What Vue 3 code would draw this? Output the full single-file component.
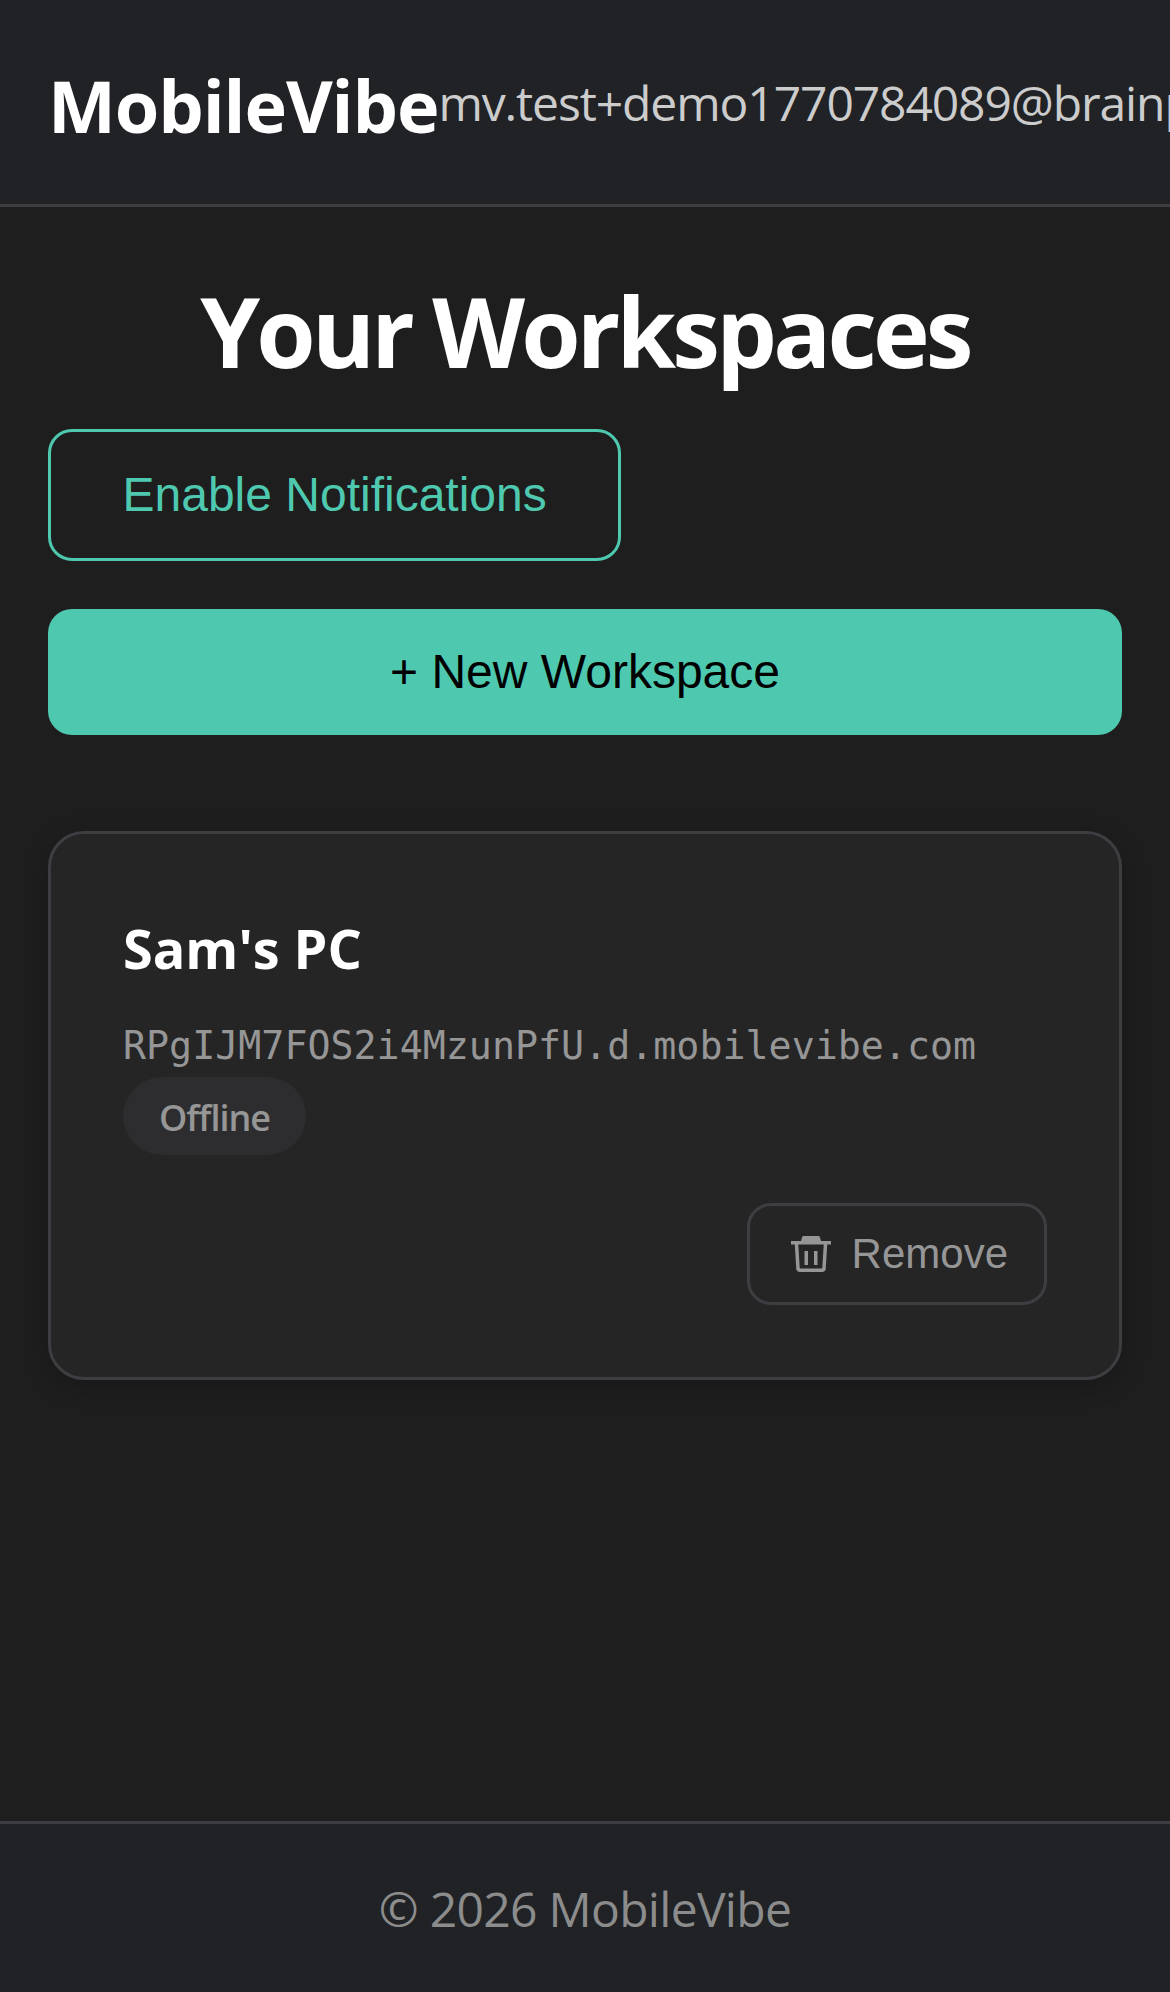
<script setup>
const workspaces = [
  { id: 1, name: "Sam's PC", host: 'RPgIJM7FOS2i4MzunPfU.d.mobilevibe.com', status: 'Offline' }
]
</script>

<template>
  <div class="page">
    <header class="topbar">
      <span class="brand">MobileVibe</span>
      <span class="user-email">mv.test+demo1770784089@brainpeek.com</span>
    </header>

    <main class="content">
      <h1>Your Workspaces</h1>
      <button class="btn-notify" type="button">Enable Notifications</button>
      <button class="btn-new" type="button">+ New Workspace</button>

      <article v-for="item in workspaces" :key="item.id" class="ws-card">
        <h2>{{ item.name }}</h2>
        <p class="ws-host">{{ item.host }}</p>
        <span class="ws-badge">{{ item.status }}</span>
        <div class="ws-actions">
          <button class="btn-remove" type="button">
            <svg class="trash" viewBox="0 0 40 36" aria-hidden="true">
              <path d="M0 5h40v3.500H0z" fill="currentColor" />
              <path d="M10 5 11 1.500A1.500 1.500 0 0 1 12.500 0h15A1.500 1.500 0 0 1 29 1.500L30 5z" fill="currentColor" />
              <path d="M5.500 8 7 32.500A2 2 0 0 0 9 34.300h22a2 2 0 0 0 2-1.800L34.500 8" fill="none" stroke="currentColor" stroke-width="3.500" />
              <path d="M13.500 15h3.500v14h-3.500zM23 15h3.500v14H23z" fill="currentColor" />
            </svg>
            <span>Remove</span>
          </button>
        </div>
      </article>
    </main>

    <footer class="bottombar">© 2026 MobileVibe</footer>
  </div>
</template>

<style>
html,
body {
  margin: 0;
  background: #1e1e1e;
  overflow: hidden;
}
</style>

<style scoped>
.page {
  display: flex;
  flex-direction: column;
  width: 1170px;
  height: 1992px;
  overflow: hidden;
  background: #1e1e1e;
  color: #fff;
  font-family: "Open Sans", "Noto Sans", sans-serif;
}

.topbar {
  display: flex;
  align-items: center;
  flex: none;
  height: 204px;
  padding: 0 48px;
  background: #202226;
  border-bottom: 3px solid #3e3e42;
  white-space: nowrap;
}

.brand {
  flex: none;
  margin-top: 5px;
  font-size: 72px;
  font-weight: 700;
  letter-spacing: -1.1px;
}

.user-email {
  flex: none;
  font-size: 48px;
  letter-spacing: -1.1px;
  color: #cccccc;
}

.content {
  display: flex;
  flex: 1;
  flex-direction: column;
  align-items: flex-start;
  padding: 59px 48px 0;
}

h1 {
  align-self: stretch;
  margin: 0 0 33px;
  font-size: 96px;
  line-height: 130px;
  font-weight: 700;
  letter-spacing: -3.8px;
  text-align: center;
}

button {
  font-family: "Liberation Sans", Arial, sans-serif;
  cursor: pointer;
}

.btn-notify {
  padding: 36px 71.500px;
  font-size: 48px;
  line-height: 54px;
  color: #4ec9b0;
  background: transparent;
  border: 3px solid #4ec9b0;
  border-radius: 24px;
}

.btn-new {
  align-self: stretch;
  margin-top: 48px;
  padding: 36px 72px;
  font-size: 48px;
  line-height: 54px;
  color: #000;
  background: #4ec9b0;
  border: 0;
  border-radius: 24px;
}

.ws-card {
  align-self: stretch;
  margin-top: 96px;
  padding: 72px;
  background: #252526;
  border: 3px solid #3e3e42;
  border-radius: 36px;
  box-shadow: 0 6px 24px rgba(0, 0, 0, 0.2);
}

h2 {
  margin: 0 0 29px;
  font-size: 54px;
  line-height: 84px;
  font-weight: 700;
}

.ws-host {
  margin: 0 0 4px;
  font-family: "DejaVu Sans Mono", "Liberation Mono", monospace;
  font-size: 38.3px;
  line-height: 54px;
  color: #969696;
}

.ws-badge {
  display: inline-block;
  padding: 14px 36px 10px;
  font-size: 36px;
  line-height: 54px;
  font-weight: 600;
  letter-spacing: -1px;
  color: #969696;
  background: #2d2d30;
  border-radius: 39px;
}

.ws-actions {
  display: flex;
  justify-content: flex-end;
  margin-top: 48px;
}

.btn-remove {
  display: flex;
  align-items: center;
  gap: 21px;
  height: 102px;
  padding: 0 36px 0 41px;
  font-size: 42px;
  color: #969696;
  background: transparent;
  border: 3px solid #3e3e42;
  border-radius: 24px;
}

.trash {
  width: 40px;
  height: 36px;
}

.bottombar {
  flex: none;
  height: 171px;
  box-sizing: border-box;
  padding-top: 52px;
  font-size: 48px;
  line-height: 66px;
  letter-spacing: -0.7px;
  text-align: center;
  color: #8c8c8c;
  background: #202226;
  border-top: 3px solid #3e3e42;
}
</style>
